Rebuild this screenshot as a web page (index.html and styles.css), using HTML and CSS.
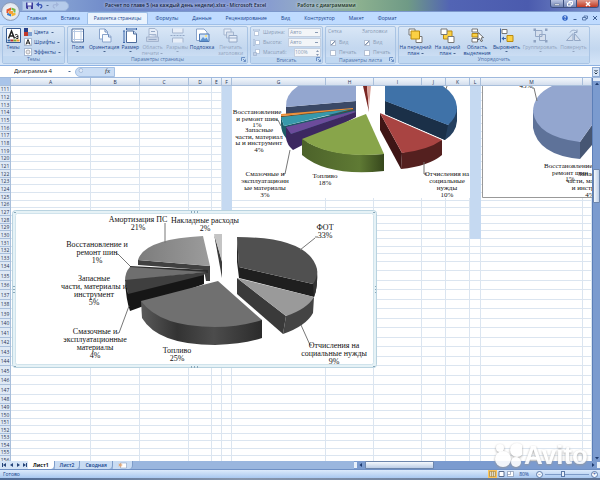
FILE: index.html
```html
<!DOCTYPE html>
<html lang="ru">

<head>
    <meta charset="UTF-8">
    <meta name="viewport" content="width=device-width, initial-scale=1.0">
    <title>Расчет по главе 5 - Microsoft Excel</title>
    <link rel="stylesheet" href="styles.css">
</head>

<body>
    <header class="titlebar">
        <div class="quick">
            <button aria-label="Сохранить"><svg width="7" height="7" viewBox="0 0 14 14"><path fill="#3c3c9c" d="M0 1h14v13H2l-2-2z"/><path fill="#e8eefc" d="M3 1h8v6H3z"/><path fill="#b9c5dd" d="M4 9h6v5H4z"/></svg></button>
            <button aria-label="Отменить"><svg width="7" height="7" viewBox="0 0 14 14"><path fill="none" stroke="#3a56b5" stroke-width="2.5" d="M3 5h5c5 0 5 7 0 7"/><path fill="#3a56b5" d="M0 5l6-5v10z"/></svg></button>
            <span class="arrow"></span>
            <button aria-label="Вернуть"><svg width="7" height="7" viewBox="0 0 14 14"><path fill="none" stroke="#a3b6da" stroke-width="2.5" d="M11 5H6c-5 0-5 7 0 7"/><path fill="#a3b6da" d="M14 5L8 0v10z"/></svg></button>
        </div>
        <h1>Расчет по главе 5 (на каждый день недели).xlsx - Microsoft Excel</h1>
        <span class="context">Работа с диаграммами</span>
        <div class="window-buttons">
            <button aria-label="Свернуть"><svg width="8" height="6" viewBox="0 0 16 12"><path fill="#fff" stroke="#51617d" d="M3 6h10v3H3z"/></svg></button>
            <button aria-label="Развернуть"><svg width="8" height="6" viewBox="0 0 16 12"><path fill="none" stroke="#fff" stroke-width="2" d="M3 4h7v6H3zM6 4V1h7v6h-3"/></svg></button>
            <button class="close" aria-label="Закрыть"><svg width="8" height="6" viewBox="0 0 16 12"><path stroke="#fff" stroke-width="3" d="M4 2l8 8M12 2l-8 8"/></svg></button>
        </div>
    </header>
    <button class="office" aria-label="Office">
        <svg width="12" height="12" viewBox="0 0 24 24">
            <path fill="#e4572e" d="M3 7l9-4v6l-5 1v5l-4-1z"/>
            <path fill="#7ab648" d="M13 3l8 3v7h-4V9l-4-1z"/>
            <path fill="#f2b632" d="M13 21l8-3v-4h-4l-4 2z"/>
            <path fill="#3f7fcf" d="M12 21l-8-3v-3l4-1 4 2z"/>
            <path fill="#f6a13a" d="M8 10h8v6H8z"/>
        </svg>
    </button>

    <nav class="tabs">
        <a href="#">Главная</a>
        <a href="#">Вставка</a>
        <a href="#" class="active">Разметка страницы</a>
        <a href="#">Формулы</a>
        <a href="#">Данные</a>
        <a href="#">Рецензирование</a>
        <a href="#">Вид</a>
        <a href="#">Конструктор</a>
        <a href="#">Макет</a>
        <a href="#">Формат</a>
        <div class="doc-buttons">
            <button aria-label="Справка"><svg width="6" height="6" viewBox="0 0 12 12"><circle cx="6" cy="6" r="5.5" fill="#2a5fc4"/><path fill="none" stroke="#fff" stroke-width="1.5" d="M4 5c0-3 4-3 4-1 0 1-2 1-2 3M6 8v2"/></svg></button>
            <button aria-label="Свернуть книгу"><svg width="6" height="6" viewBox="0 0 12 12"><path stroke="#3e5f93" stroke-width="2" d="M3 9h6"/></svg></button>
            <button aria-label="Восстановить книгу"><svg width="6" height="6" viewBox="0 0 12 12"><path fill="none" stroke="#3e5f93" stroke-width="1.5" d="M1 5h7v5H1zM4 5V2h7v5H8"/></svg></button>
            <button aria-label="Закрыть книгу"><svg width="6" height="6" viewBox="0 0 12 12"><path stroke="#3e5f93" stroke-width="2" d="M2 2l8 8M10 2l-8 8"/></svg></button>
        </div>
    </nav>

    <div class="ribbon">
        <section class="group themes">
            <div class="items">
                <button class="big w20">
                    <svg width="15" height="15" viewBox="0 0 30 30"><path fill="#fff" stroke="#3b5f96" stroke-width="2" d="M1 1h28v28H1z"/><path fill="none" stroke="#222" stroke-width="3" d="M5 21l6-15 6 15M7 16h8"/><path fill="none" stroke="#222" stroke-width="2" d="M18 14c6-3 6 1 6 7-6 1-7-4 0-4"/><path fill="#356aa8" d="M3 23h6v4H3z"/><path fill="#b33" d="M9 23h6v4H9z"/><path fill="#7a3" d="M15 23h6v4h-6z"/><path fill="#e93" d="M21 23h6v4h-6z"/></svg>
                    <span>Темы</span><i class="arrow"></i>
                </button>
                <div class="stack">
                    <button><svg width="8" height="8" viewBox="0 0 16 16"><path fill="#26408b" d="M0 0h8v8H0z"/><path fill="#e8e8e8" d="M8 0h8v8H8z"/><path fill="#c0392b" d="M0 8h8v8H0z"/><path fill="#7d9fd0" d="M8 8h8v8H8z"/></svg>Цвета<i class="arrow"></i></button>
                    <button><svg width="8" height="8" viewBox="0 0 16 16"><path fill="#fff" stroke="#6b83a8" d="M1 1h14v14H1z"/><path fill="none" stroke="#222" stroke-width="2" d="M4 13l4-10 4 10M6 10h5"/></svg>Шрифты<i class="arrow"></i></button>
                    <button><svg width="8" height="8" viewBox="0 0 16 16"><path fill="#fff" stroke="#6b83a8" d="M1 1h14v14H1z"/><circle cx="8" cy="8" r="4" fill="#e9e9ef" stroke="#777"/></svg>Эффекты<i class="arrow"></i></button>
                </div>
            </div>
            <h2>Темы</h2>
        </section>

        <section class="group page">
            <div class="items">
                <button class="big w20">
                    <svg width="15" height="15" viewBox="0 0 30 30"><path fill="#fff" stroke="#4d6c9c" stroke-width="2" d="M4 2h23v26H4z"/><path stroke="#b9cbe4" stroke-width="2" d="M9 3v24M22 3v24M5 7h21M5 23h21"/></svg>
                    <span>Поля</span><i class="arrow"></i>
                </button>
                <button class="big w33">
                    <svg width="15" height="15" viewBox="0 0 30 30"><path fill="#fff" stroke="#8aa4cb" stroke-width="2" d="M5 2h11l5 5v15H5z"/><path fill="#f4f8fd" stroke="#8aa4cb" stroke-width="2" d="M11 13h13l4 4v11H11z"/><path fill="none" stroke="#6d8cbc" stroke-width="2" d="M16 2v6h5M23 13v5h5"/></svg>
                    <span>Ориентация</span><i class="arrow"></i>
                </button>
                <button class="big w20">
                    <svg width="15" height="15" viewBox="0 0 30 30"><path fill="#fff" stroke="#4d6c9c" stroke-width="2" d="M7 6h14l6 6v17H7z"/><path fill="#cfdff5" stroke="#4d6c9c" stroke-width="2" d="M21 6v6h6"/><path stroke="#3d68ac" stroke-width="2" d="M7 2h20M2 6v23M7 0v4M27 0v4M0 6h4M0 29h4"/></svg>
                    <span>Размер</span><i class="arrow"></i>
                </button>
                <button class="big w25" disabled>
                    <svg width="15" height="15" viewBox="0 0 30 30"><path fill="#e7eef8" stroke="#a4b5cf" stroke-width="2" d="M8 1h12l5 5v14H8z"/><path fill="#c7d3e6" stroke="#a4b5cf" stroke-width="2" d="M3 18h24v9H3zM8 13h14v5"/><path stroke="#94a8c6" stroke-width="2" d="M7 23h16M12 7h8"/></svg>
                    <span>Область<br>печати <i class="arrow"></i></span>
                </button>
                <button class="big w25" disabled>
                    <svg width="15" height="15" viewBox="0 0 30 30"><path fill="#e7eef8" stroke="#a4b5cf" stroke-width="2" d="M5 1v9h21V1M5 29v-9h21v9"/><path stroke="#94a8c6" stroke-width="2" stroke-dasharray="4 2" d="M1 15h28"/></svg>
                    <span>Разрывы</span><i class="arrow"></i>
                </button>
                <button class="big w25">
                    <svg width="15" height="15" viewBox="0 0 30 30"><path fill="#fff" stroke="#8aa4cb" stroke-width="2" d="M3 2h15l6 6v17H3z"/><path fill="#cfe3f8" stroke="#4d78b5" stroke-width="2" d="M9 12h19v15H9z"/><path fill="#5e93cf" d="M10 26l6-8 4 4 3-3 4 7z"/><circle cx="22" cy="16" r="2" fill="#ffe26a"/></svg>
                    <span>Подложка</span>
                </button>
                <button class="big w33" disabled>
                    <svg width="15" height="15" viewBox="0 0 30 30"><path fill="#e7eef8" stroke="#a4b5cf" stroke-width="2" d="M2 2h14v12H2z"/><path fill="#d5dfed" stroke="#a4b5cf" stroke-width="2" d="M7 8h14v12H7z"/><path fill="#e7eef8" stroke="#94a8c6" stroke-width="2" d="M12 15h16v13H12zM12 20h16"/></svg>
                    <span>Печатать<br>заголовки</span>
                </button>
            </div>
            <h2>Параметры страницы</h2>
            <button class="launcher" aria-label="Параметры страницы"><svg width="5" height="5" viewBox="0 0 10 10"><path fill="none" stroke="#6b8fc4" stroke-width="2" d="M1 8V1h7M4 4l5 5M9 5v4H5"/></svg></button>
        </section>

        <section class="group fit">
            <div class="items fields">
                <label for="width"><svg width="7" height="7" viewBox="0 0 14 14"><path fill="#fff" stroke="#8fa3c2" d="M3 5h8v8H3z"/><path stroke="#8fa3c2" d="M0 2h14M0 0v4M14 0v4"/></svg>Ширина:</label>
                <select id="width" disabled><option>Авто</option></select>
                <label for="height"><svg width="7" height="7" viewBox="0 0 14 14"><path fill="#fff" stroke="#8fa3c2" d="M5 3h8v8H5z"/><path stroke="#8fa3c2" d="M2 0v14M0 0h4M0 14h4"/></svg>Высота:</label>
                <select id="height" disabled><option>Авто</option></select>
                <label for="scale"><svg width="7" height="7" viewBox="0 0 14 14"><path fill="#fff" stroke="#8fa3c2" d="M5 1h8v8H5z"/><path fill="#c3d0e4" stroke="#8fa3c2" d="M1 7h6v6H1z"/></svg>Масштаб:</label>
                <div class="spin"><input id="scale" value="100%" disabled><svg width="5" height="8" viewBox="0 0 10 16"><path fill="#8798b2" d="M2 6l3-4 3 4zM2 10l3 4 3-4z"/></svg></div>
            </div>
            <h2>Вписать</h2>
            <button class="launcher" aria-label="Вписать"><svg width="5" height="5" viewBox="0 0 10 10"><path fill="none" stroke="#6b8fc4" stroke-width="2" d="M1 8V1h7M4 4l5 5M9 5v4H5"/></svg></button>
        </section>

        <section class="group options">
            <div class="items checks">
                <span>Сетка</span><span>Заголовки</span>
                <label><input type="checkbox" checked disabled>Вид</label>
                <label><input type="checkbox" checked disabled>Вид</label>
                <label><input type="checkbox" disabled>Печать</label>
                <label><input type="checkbox" disabled>Печать</label>
            </div>
            <h2>Параметры листа</h2>
            <button class="launcher" aria-label="Параметры листа"><svg width="5" height="5" viewBox="0 0 10 10"><path fill="none" stroke="#6b8fc4" stroke-width="2" d="M1 8V1h7M4 4l5 5M9 5v4H5"/></svg></button>
        </section>

        <section class="group arrange">
            <div class="items">
                <button class="big w33">
                    <svg width="15" height="15" viewBox="0 0 30 30"><path fill="#fff" stroke="#777" stroke-width="2" d="M2 2h12v12H2zM16 17h12v12H16z"/><path fill="#fbd044" stroke="#b98a10" stroke-width="2" d="M6 6h17v16H6z"/></svg>
                    <span>На передний<br>план <i class="arrow"></i></span>
                </button>
                <button class="big w31">
                    <svg width="15" height="15" viewBox="0 0 30 30"><path fill="#fbd044" stroke="#b98a10" stroke-width="2" d="M7 6h17v16H7z"/><path fill="#fff" stroke="#777" stroke-width="2" d="M2 2h12v11H2zM16 17h12v12H16z"/></svg>
                    <span>На задний<br>план <i class="arrow"></i></span>
                </button>
                <button class="big w28">
                    <svg width="15" height="15" viewBox="0 0 30 30"><path fill="#fff" stroke="#777" stroke-width="2" d="M4 2h11v6H4zM4 21h11v7H4z"/><path fill="#fbd044" stroke="#b98a10" stroke-width="2" d="M4 11h15v7H4z"/><path fill="#fff" stroke="#444" stroke-width="1.5" d="M16 9l11 10-5 1 3 6-3 1-3-6-3 3z"/></svg>
                    <span>Область<br>выделения</span>
                </button>
                <button class="big w31">
                    <svg width="15" height="15" viewBox="0 0 30 30"><path stroke="#3b67ac" stroke-width="2" d="M3 1v28"/><path fill="#fff" stroke="#777" stroke-width="2" d="M6 3h10v8H6z"/><path fill="#fbd044" stroke="#b98a10" stroke-width="2" d="M16 15h12v12H16z"/><path fill="#3b67ac" d="M5 21l5-4v3h4v2h-4v3z"/></svg>
                    <span>Выровнять</span><i class="arrow"></i>
                </button>
                <button class="big w36" disabled>
                    <svg width="15" height="15" viewBox="0 0 30 30"><path fill="#d5dfed" stroke="#94a8c6" stroke-width="2" d="M5 5h13v12H5zM13 13h12v12H13z"/><path fill="#8fa3c2" d="M1 1h5v5H1zM24 1h5v5h-5zM1 24h5v5H1zM24 24h5v5h-5z"/></svg>
                    <span>Группировать</span><i class="arrow"></i>
                </button>
                <button class="big w31" disabled>
                    <svg width="15" height="15" viewBox="0 0 30 30"><path fill="#d5dfed" stroke="#94a8c6" stroke-width="2" d="M1 25l13-14v14zM17 25V11l12 14z"/><path fill="none" stroke="#94a8c6" stroke-width="2" d="M8 9c3-6 11-6 14-1M22 3v6h-6"/></svg>
                    <span>Повернуть</span><i class="arrow"></i>
                </button>
            </div>
            <h2>Упорядочить</h2>
        </section>
    </div>

    <div class="formula-bar">
        <input class="name" aria-label="Имя" value="Диаграмма 4">
        <span class="arrow"></span>
        <div class="fx"><svg width="5" height="7" viewBox="0 0 10 14"><circle cx="6" cy="5" r="4" fill="#dfe9f7" stroke="#7f99c0"/></svg><em>fx</em></div>
        <input class="formula" aria-label="Формула">
        <button aria-label="Развернуть строку"><svg width="6" height="8" viewBox="0 0 12 16"><path fill="none" stroke="#234" stroke-width="2" d="M3 4l3 3 3-3M3 9l3 3 3-3"/></svg></button>
    </div>

    <main class="workspace">
        <div class="sheet">
            <table id="cells"></table>

            <svg class="chart chart-color" viewBox="232 86 238 112">
                <defs>
                    <linearGradient id="greenSide"><stop offset="0" stop-color="#4c622a"/><stop offset=".7" stop-color="#5f7a34"/><stop offset="1" stop-color="#36471c"/></linearGradient>
                </defs>
                <path fill="#fff" d="M232 86h238v112H232z"/>
                <path fill="#3a4866" d="M286 107L356 101V116L286 114z"/>
                <path fill="#93a6cf" d="M298 86Q285 95 286 107L356 101V86z"/>
                <path fill="#7a2622" d="M363 86h4l2 26z"/>
                <path fill="#dba39a" d="M367 86h4l-2 20z"/>
                <path fill="#25405f" d="M385 101L448 125L457 107V121Q456 133 445 140L385 114z"/>
                <path fill="#1b3048" d="M385 101L448 125L445 140L385 114z"/>
                <path fill="#3f72a8" d="M385 86V101L448 125Q457 117 457 107Q456 95 443 86z"/>
                <path fill="#7c420f" d="M281 116L353 109V111L281 119z"/>
                <path fill="#ee8f35" d="M281 114L353 108V109L281 116z"/>
                <path fill="#1d5b66" d="M281 117L284 126L352 110L356 112L286 138Q281 132 281 124z"/>
                <path fill="#3799ab" d="M281 117L353 109L284 126z"/>
                <path fill="#3c2860" d="M286 126L291 134L356 112V117L293 150Q287 145 286 138z"/>
                <path fill="#6c4b9b" d="M286 127L354 111L356 112L291 134z"/>
                <path fill="url(#greenSide)" d="M302 139V155Q328 177 384 171V154Q330 158 302 139z"/>
                <path fill="#88a54a" d="M366 114L302 139Q330 159 384 154z"/>
                <path fill="#54201f" d="M402 153L442 140V155Q429 166 401 169z"/>
                <path fill="#3f1515" d="M380 113L402 153L401 169L380 130z"/>
                <path fill="#a94442" d="M380 113L442 140Q428 150 402 153z"/>
                <path class="lead" d="M276 120h2l3 6M290 150l-5 24h-2M424 162v12h3M446 89l1-3"/>
                <g class="labels small">
                    <text x="257" y="114">Восстановление</text><text x="257" y="121">и ремонт шин</text><text x="257" y="127">1%</text>
                    <text x="259" y="132">Запасные</text><text x="259" y="139">части, материал</text><text x="259" y="145">ы и инструмент</text><text x="259" y="152">4%</text>
                    <text x="265" y="176">Смазочные и</text><text x="265" y="183">эксплуатационн</text><text x="265" y="190">ые материалы</text><text x="265" y="197">3%</text>
                    <text x="325" y="178">Топливо</text><text x="325" y="185">18%</text>
                    <text x="447" y="176">Отчисления на</text><text x="447" y="183">социальные</text><text x="447" y="190">нужды</text><text x="447" y="197">10%</text>
                </g>
            </svg>

            <svg class="chart chart-right" viewBox="482 86 110 112">
                <path fill="#fff" stroke="#999" d="M482.5 80V197.500H600V80z"/>
                <path fill="#5e7299" d="M533 110V128Q538 155 580 159V142z"/>
                <path fill="#465673" d="M580 142L592 125V145L580 159z"/>
                <path fill="#93a6cf" d="M552 86Q533 95 533 112Q537 137 580 142L592 125V86z"/>
                <path class="lead" d="M532 88h2l3 13"/>
                <g class="labels small">
                    <text x="526" y="88">45%</text>
                    <text x="571" y="168">Восстановление и</text><text x="570" y="175">ремонт шин</text><text x="570" y="181">1%</text>
                    <text x="592" y="176">Запасные</text><text x="592" y="183">части, материалы</text><text x="592" y="190">и инструмент</text><text x="590" y="197">4%</text>
                </g>
            </svg>

            <svg class="chart chart-gray" viewBox="12 210 366 159">
                <defs>
                    <linearGradient id="graySide"><stop offset="0" stop-color="#5a5a5a"/><stop offset=".3" stop-color="#333"/><stop offset=".6" stop-color="#4c4c4c"/><stop offset="1" stop-color="#2b2b2b"/></linearGradient>
                    <linearGradient id="grayTop"><stop offset="0" stop-color="#7c7c7c"/><stop offset="1" stop-color="#9c9c9c"/></linearGradient>
                </defs>
                <rect x="12.500" y="210.500" width="364" height="157" rx="3" fill="#e6f2f6" stroke="#b9d3e0"/>
                <rect x="15.500" y="213.500" width="358" height="151" rx="2" fill="#fff" stroke="#d0e3ec"/>
                <path fill="#8aa9bb" d="M191 211h1v2h-1zM194 211h1v2h-1zM197 211h1v2h-1zM191 366h1v2h-1zM194 366h1v2h-1zM197 366h1v2h-1zM13 286h2v1h-2zM13 289h2v1h-2zM13 292h2v1h-2zM375 286h1v1h-1zM375 289h1v1h-1zM375 292h1v1h-1zM14 212h2v1h-2zM373 212h2v1h-2zM14 366h2v1h-2zM373 366h2v1h-2z"/>
                <path fill="#404040" d="M138 260L210 266V281H206L204 270L138 265z"/>
                <path fill="url(#grayTop)" d="M138 260Q144 239 203 236L210 266z"/>
                <path fill="#3a3a3a" d="M214 234L222 261V278z"/>
                <path fill="#c4c4c4" d="M214 234h8v28z"/>
                <path fill="#2e2e2e" d="M130 266L208 270V273L130 268z"/>
                <path fill="#6f6f6f" d="M130 267L207 272L125 281Q125 272 130 267z"/>
                <path fill="#161616" d="M125 280L128 293L204 274V284L130 311Q126 300 125 280z"/>
                <path fill="#3f3f3f" d="M125 280L206 272L204 275L128 294z"/>
                <path fill="url(#graySide)" d="M141 301L142 318Q158 345 215 345Q245 344 262 338V320z"/>
                <path fill="#707070" d="M218 281L141 301Q160 327 215 327Q240 327 262 320z"/>
                <path fill="#1f1f1f" d="M239 267L313 284L317 270Q318 287 314 297L239 278z"/>
                <path fill="#333" d="M313 284L317 270Q318 287 314 297z"/>
                <path fill="#505050" d="M237 237L239 267L313 284Q318 277 317 269Q309 237 237 237z"/>
                <path fill="#262626" d="M237 237L239 267V278L237 262z"/>
                <path fill="#444" d="M286 316L314 297L313 313Q306 326 283 334z"/>
                <path fill="#3a3a3a" d="M237 278L286 316L283 334L237 294z"/>
                <path fill="#9a9a9a" d="M237 278L314 297Q307 309 286 316z"/>
                <path class="lead" d="M165 223V243M116 254h2l12 12M117 333h2l10-27M315 237h3M315 238L300 250M301 325l9 20h2"/>
                <g class="labels">
                    <text x="138" y="222">Амортизация ПС</text><text x="138" y="230">21%</text>
                    <text x="205" y="223">Накладные расходы</text><text x="205" y="231">2%</text>
                    <text x="325" y="230">ФОТ</text><text x="325" y="238">33%</text>
                    <text x="97" y="247">Восстановление и</text><text x="97" y="255">ремонт шин</text><text x="97" y="263">1%</text>
                    <text x="94" y="281">Запасные</text><text x="94" y="289">части, материалы и</text><text x="94" y="297">инструмент</text><text x="94" y="305">5%</text>
                    <text x="95" y="334">Смазочные и</text><text x="95" y="342">эксплуатационные</text><text x="95" y="350">материалы</text><text x="95" y="358">4%</text>
                    <text x="177" y="353">Топливо</text><text x="177" y="361">25%</text>
                    <text x="334" y="348">Отчисления на</text><text x="334" y="356">социальные нужды</text><text x="334" y="364">9%</text>
                </g>
            </svg>
        </div>
        <div class="vscroll">
            <span class="split"></span>
            <svg width="8" height="5" viewBox="0 0 16 10"><path fill="#1e3a6e" d="M4 8l4-5 4 5z"/></svg>
            <div class="track"><div class="thumb"></div></div>
            <svg width="8" height="5" viewBox="0 0 16 10"><path fill="#1e3a6e" d="M4 2l4 5 4-5z"/></svg>
        </div>
    </main>

    <div class="sheet-bar">
        <svg class="nav-arrows" width="28" height="8" viewBox="0 0 28 8"><path fill="#27457a" d="M2 2h1v4H2zM6 2v4L3 4zM13 2v4l-3-2zM17 2v4l3-2zM23 2v4l3-2zM26 2h1v4h-1z"/></svg>
        <div class="sheet-tabs">
            <a href="#" class="active">Лист1</a>
            <a href="#">Лист2</a>
            <a href="#">Сводная</a>
            <button aria-label="Вставить лист"><svg width="9" height="7" viewBox="0 0 18 14"><path fill="#fff" stroke="#7890b5" d="M5 2h12v10H5z"/><path fill="#e0a878" d="M1 3l3 1 2-3 1 4 3 1-3 1-1 4-2-3-3 1 1-3z"/></svg></button>
        </div>
        <div class="hscroll">
            <span class="split"></span>
            <svg width="8" height="8" viewBox="0 0 16 16"><path fill="#1e3a6e" d="M10 4v8L5 8z"/></svg>
            <div class="track"><div class="thumb"></div></div>
            <svg width="8" height="8" viewBox="0 0 16 16"><path fill="#1e3a6e" d="M6 4v8l5-4z"/></svg>
            <span class="split"></span>
        </div>
    </div>

    <footer class="status">
        <span class="ready">Готово</span>
        <div class="views">
            <button class="on" aria-label="Обычный"><svg width="7" height="6" viewBox="0 0 14 12"><path fill="#fff" stroke="#8b6914" d="M1 1h12v10H1zM1 4h12M1 8h12M5 1v10M9 1v10"/></svg></button>
            <button aria-label="Разметка"><svg width="7" height="6" viewBox="0 0 14 12"><path fill="#fff" stroke="#5a6e90" stroke-width="2" d="M2 1h10v10H2z"/></svg></button>
            <button aria-label="Страничный"><svg width="7" height="6" viewBox="0 0 14 12"><path fill="#fff" stroke="#5a6e90" d="M1 1h12v10H1zM7 1v6H1"/></svg></button>
        </div>
        <a href="#" class="zoom-value">80%</a>
        <button class="round" aria-label="Уменьшить">−</button>
        <input type="range" min="0" max="100" value="40" aria-label="Масштаб">
        <button class="round" aria-label="Увеличить">+</button>
    </footer>
    <div class="taskbar"></div>

    <div class="watermark">
        <svg width="28" height="26" viewBox="0 0 28 26"><circle cx="9" cy="17" r="8"/><circle cx="23" cy="8" r="7"/><circle cx="6" cy="6" r="4"/><circle cx="22" cy="20" r="5"/></svg>
        <span>Avito</span>
    </div>

    <script src="script.js"></script>
</body>

</html>
```
FILE: styles.css
```css
* {
    box-sizing: border-box;
}

body {
    font-family: "Open Sans", "Noto Sans", sans-serif;
    font-size: 5px;
    line-height: 7px;
    color: #15428b;
    margin: 0;
    height: 100vh;
    display: flex;
    flex-direction: column;
    position: relative;
    overflow: hidden;
    background-color: #bfdbff;
}

button,
input,
select {
    font: inherit;
    color: inherit;
    border: none;
    background: none;
    padding: 0;
    margin: 0;
    min-width: 0;
}

button {
    display: flex;
    align-items: center;
    justify-content: center;
}

a {
    color: inherit;
    text-decoration: none;
}

svg {
    display: block;
    flex: none;
}

h1,
h2 {
    font-size: 5px;
    font-weight: normal;
    margin: 0;
}

.arrow {
    display: inline-block;
    flex: none;
    border: 1px solid transparent;
    border-top-color: #4a6690;
    border-bottom: none;
    width: 3px;
    height: 1px;
}

/* title bar */
.titlebar {
    display: flex;
    align-items: center;
    height: 12px;
    flex: none;
    padding-left: 22px;
    background: linear-gradient(90deg, #8fa9d4 0, #7f9bd0 12%, #6c86c8 20%, #8296d4 42%, #92a9c8 50%, #8bb08f 60%, #6f9a86 68%, #5264b4 75%, #4b5bae 88%, #7d93cb);
    border-bottom: 1px solid #7d99cc;
}

.quick {
    display: flex;
    align-items: center;
    gap: 3px;
    width: 47px;
    height: 10px;
    padding-left: 3px;
    background-color: #b5cbea;
    border: 1px solid #9db6dc;
    border-radius: 0 5px 5px 0;
}

.titlebar h1 {
    color: #101c3c;
    font-weight: 600;
    margin-left: 36px;
    white-space: nowrap;
    text-shadow: 0 0 3px #fff;
}

.context {
    color: #14301c;
    font-weight: 600;
    margin-left: 31px;
    white-space: nowrap;
    text-shadow: 0 0 3px #fff;
}

.window-buttons {
    display: flex;
    align-self: flex-start;
    margin-left: auto;
    margin-right: 1px;
    height: 8px;
    border: 1px solid #3d4f80;
    border-top: none;
    border-radius: 0 0 3px 3px;
    overflow: hidden;
}

.window-buttons button {
    width: 13px;
    background: linear-gradient(#b9c4e2, #7284b4);
    border-right: 1px solid #3d4f80;
}

.window-buttons .close {
    width: 21px;
    border: none;
    background: linear-gradient(#e09a8c, #c13a24);
}

.office {
    position: absolute;
    left: 1px;
    top: 2px;
    width: 19px;
    height: 19px;
    border-radius: 50%;
    border: 1px solid #8c9cb8;
    background: radial-gradient(#fff, #e3e8f0 60%, #a9b6cc);
}

/* tabs */
.tabs {
    display: flex;
    height: 12px;
    flex: none;
    padding-left: 20px;
}

.tabs a {
    padding: 3px 7px 0;
    border-radius: 2px 2px 0 0;
}

.tabs .active {
    background-color: #eaf3fd;
    border: 1px solid #9ebfe8;
    border-bottom: none;
    padding: 2px 6px 0;
}

.doc-buttons {
    display: flex;
    align-items: center;
    gap: 4px;
    margin-left: auto;
    padding-right: 2px;
}

/* ribbon */
.ribbon {
    display: flex;
    gap: 2px;
    height: 42px;
    flex: none;
    padding: 1px 2px;
    background: linear-gradient(#dbe8f7, #cadcf1 40%, #c3d7ef 60%, #d5e5f8);
    border-top: 1px solid #9ebfe8;
    border-bottom: 1px solid #8db2e3;
}

.group {
    position: relative;
    display: flex;
    flex-direction: column;
    border: 1px solid #a9c4e4;
    border-radius: 2px;
    overflow: hidden;
}

.group h2 {
    height: 7px;
    line-height: 6px;
    text-align: center;
    color: #4c6fa8;
    background-color: #c1d8f1;
}

.launcher {
    position: absolute;
    right: 1px;
    bottom: 1px;
}

.items {
    display: flex;
    flex: 1;
    padding-top: 1px;
}

.themes {
    width: 63px;
}

.page {
    width: 181px;
}

.fit {
    width: 73px;
}

.options {
    width: 71px;
}

.arrange {
    width: 192px;
}

.big {
    flex-direction: column;
    justify-content: flex-start;
    line-height: 6px;
    white-space: nowrap;
}

.big span {
    margin-top: 1px;
}

.big > .arrow {
    margin-top: 1px;
}

.big:disabled {
    color: #93a5c0;
}

.big:disabled .arrow {
    border-top-color: #93a5c0;
}

.big .arrow {
    vertical-align: 1px;
}

.w20 {
    width: 20px;
}

.w25 {
    width: 25px;
}

.w28 {
    width: 28px;
}

.w31 {
    width: 31px;
}

.w33 {
    width: 33px;
}

.w36 {
    width: 36px;
}

.stack {
    display: flex;
    flex-direction: column;
    gap: 2px;
    padding-left: 1px;
}

.stack button {
    justify-content: flex-start;
    gap: 2px;
    height: 8px;
}

.fields {
    display: grid;
    grid-template-columns: 33px 33px;
    grid-auto-rows: 9px;
    gap: 1px 2px;
    padding-left: 2px;
    color: #8a9bb5;
}

.fields label {
    display: flex;
    align-items: center;
    gap: 3px;
}

.fields select,
.spin {
    background-color: #f3f5f8;
    border: 1px solid #c3cfe0;
    color: #8a9bb5;
    height: 9px;
    opacity: 1;
}

.fields select {
    appearance: none;
    padding-left: 1px;
    background-image: linear-gradient(#8a9bb5, #8a9bb5);
    background-size: 3px 1px;
    background-position: right 2px center;
    background-repeat: no-repeat;
}

.spin {
    display: flex;
    align-items: center;
    margin-left: 6px;
}

.spin input {
    flex: 1;
    width: 0;
}

.checks {
    display: grid;
    grid-template-columns: 34px 1fr;
    grid-auto-rows: 9px;
    gap: 1px 0;
    padding-left: 2px;
    color: #8a9bb5;
}

.checks label {
    display: flex;
    align-items: center;
    gap: 3px;
}

.checks input {
    appearance: none;
    width: 6px;
    height: 6px;
    margin-left: 2px;
    background-color: #fff;
    border: 1px solid #b3c0d4;
}

.checks input:checked {
    background-image: linear-gradient(135deg, #fff 40%, #7f90ab 45%, #7f90ab 60%, #fff 65%);
}

/* formula bar */
.formula-bar {
    display: flex;
    align-items: center;
    height: 12px;
    flex: none;
    background-color: #fff;
    border-bottom: 1px solid #9fb9dd;
}

.formula-bar .name {
    width: 68px;
    padding-left: 14px;
    font-size: 6px;
    color: #111;
}

.fx {
    display: flex;
    justify-content: space-between;
    align-items: center;
    width: 40px;
    height: 10px;
    margin-left: 4px;
    padding: 0 4px 0 2px;
    background-color: #c9dcf4;
    border-radius: 5px 0 0 5px;
    border: 1px solid #a3bfe3;
}

.fx em {
    font-family: "Liberation Serif", serif;
    font-size: 7px;
    color: #333;
}

.formula {
    flex: 1;
    height: 10px;
}

.formula-bar button {
    width: 8px;
    height: 10px;
    background-color: #d6e5f8;
    border: 1px solid #8daad3;
}

/* sheet */
.workspace {
    display: flex;
    flex: 1;
    min-height: 0;
    background-color: #fff;
}

.sheet {
    flex: 1;
    min-width: 0;
    position: relative;
    overflow: hidden;
}

#cells {
    table-layout: fixed;
    width: 100%;
    border-spacing: 0;
}

#cells th,
#cells td {
    padding: 0;
    overflow: hidden;
    line-height: 6px;
    height: 8px;
    border-right: 1px solid #dbe5f0;
    border-bottom: 1px solid #dbe5f0;
}

#cells th {
    font-weight: normal;
    color: #1f3252;
    background-color: #dfe9f5;
    border-color: #a9bfdb;
}

#cells thead th {
    background: linear-gradient(#f3f7fc, #d3deed);
}

#cells thead th:first-child {
    background: #a9c4e9;
}

#cells .short th,
#cells .short td {
    height: 7px;
}

#cells .tall th,
#cells .tall td {
    height: 9px;
}

#cells .taller th,
#cells .taller td {
    height: 10px;
}

#cells .filled {
    background-color: #c5d9f1;
    border-color: #c5d9f1;
}

/* charts float over the cells */
.chart {
    position: absolute;
}

.chart-color {
    left: 232px;
    top: 8px;
    width: 238px;
    height: 112px;
}

.chart-right {
    left: 482px;
    top: 8px;
    width: 110px;
    height: 112px;
}

.chart-gray {
    left: 12px;
    top: 132px;
    width: 366px;
    height: 159px;
}

.lead {
    fill: none;
    stroke: #777;
}

.labels {
    font-family: "Liberation Serif", serif;
    font-size: 8px;
    fill: #111;
    text-anchor: middle;
}

.small {
    font-size: 7px;
}

/* scroll bars */
.vscroll {
    width: 8px;
    display: flex;
    flex-direction: column;
    background-color: #7b9bcf;
    border-left: 1px solid #5c7fb8;
}

.vscroll .split {
    height: 3px;
    background-color: #e1ebf8;
}

.track {
    flex: 1;
    display: flex;
}

.vscroll .track {
    padding-top: 83px;
}

.thumb {
    border: 1px solid #6d86ad;
    border-radius: 1px;
}

.vscroll .thumb {
    width: 7px;
    height: 34px;
    background: linear-gradient(90deg, #f4f8fd, #bccde6);
}

.sheet-bar {
    display: flex;
    height: 8px;
    flex: none;
    background-color: #9ab6de;
}

.nav-arrows {
    background-color: #d5e4f6;
}

.sheet-tabs {
    display: flex;
    flex: 1;
    line-height: 8px;
    font-weight: 600;
}

.sheet-tabs a,
.sheet-tabs button {
    padding: 0 5px;
    background-color: #c9dcf3;
    border-right: 1px solid #7d9cc9;
    border-radius: 0 0 4px 0;
}

.sheet-tabs .active {
    background-color: #fff;
    color: #111;
    font-weight: bold;
}

.hscroll {
    display: flex;
    width: 41%;
    background-color: #7b9bcf;
}

.hscroll .split {
    width: 3px;
    margin: 1px 0;
    background-color: #e8f0fa;
}

.hscroll .thumb {
    width: 31%;
    background: linear-gradient(#f4f8fd, #bccde6);
}

/* status bar */
.status {
    display: flex;
    align-items: center;
    height: 9px;
    flex: none;
    padding: 0 2px 0 3px;
    background: linear-gradient(#dceafb, #a9c8f0);
    border-top: 1px solid #6f90c4;
}

.ready {
    margin-right: auto;
}

.views {
    display: flex;
}

.views button {
    width: 9px;
    height: 8px;
}

.views .on {
    background-color: #fbc55c;
}

.zoom-value {
    margin: 0 7px 0 4px;
}

.round {
    width: 7px;
    height: 7px;
    border-radius: 50%;
    border: 1px solid #5c7aa8;
    background-color: #f2f7fd;
    line-height: 5px;
}

.status input {
    appearance: none;
    width: 44px;
    height: 1px;
    margin: 0 2px;
    background-color: #7d9bc8;
}

.status input::-webkit-slider-thumb {
    appearance: none;
    width: 4px;
    height: 6px;
    background-color: #e9f1fb;
    border: 1px solid #5c7aa8;
}

.taskbar {
    height: 2px;
    flex: none;
    background: linear-gradient(90deg, #4e6a95, #8796ad 40%, #5d7395);
}

.watermark {
    position: absolute;
    right: 12px;
    bottom: 12px;
    display: flex;
    align-items: center;
    gap: 2px;
    color: #fff;
    fill: #fff;
    opacity: 0.9;
    filter: drop-shadow(0 1px 1px #999);
    font-family: "Liberation Sans", sans-serif;
    font-weight: bold;
    font-size: 26px;
    line-height: 26px;
}
```
FILE: script.js
```js
const columns = [
    ['', 11], ['A', 80], ['B', 49], ['C', 49], ['D', 23], ['E', 10], ['F', 10], ['G', 94],
    ['H', 48], ['I', 48], ['J', 24], ['K', 24], ['L', 11], ['M', 102], ['', 0]
];
const table = document.getElementById('cells');

const colgroup = document.createElement('colgroup');
for (const [, width] of columns) {
    const col = document.createElement('col');
    if (width) {
        col.style.width = `${width}px`;
    }
    colgroup.appendChild(col);
}
table.appendChild(colgroup);

const head = table.createTHead().insertRow();
for (const [name] of columns) {
    const th = document.createElement('th');
    th.innerText = name;
    head.appendChild(th);
}

function rowClass(n) {
    if (n >= 134 && n <= 148) {
        return n % 2 ? 'taller' : 'tall';
    }
    if (n > 148) {
        return n % 2 ? 'short' : '';
    }
    return n % 3 === 0 ? 'short' : '';
}

const body = table.createTBody();
for (let n = 111; n <= 156; n++) {
    const row = body.insertRow();
    row.className = rowClass(n);
    const th = document.createElement('th');
    th.innerText = n;
    row.appendChild(th);
    for (let i = 1; i < columns.length; i++) {
        const cell = row.insertCell();
        if (n <= 130 && (columns[i][0] === 'F' || columns[i][0] === 'L')) {
            cell.className = 'filled';
        }
    }
}
```
